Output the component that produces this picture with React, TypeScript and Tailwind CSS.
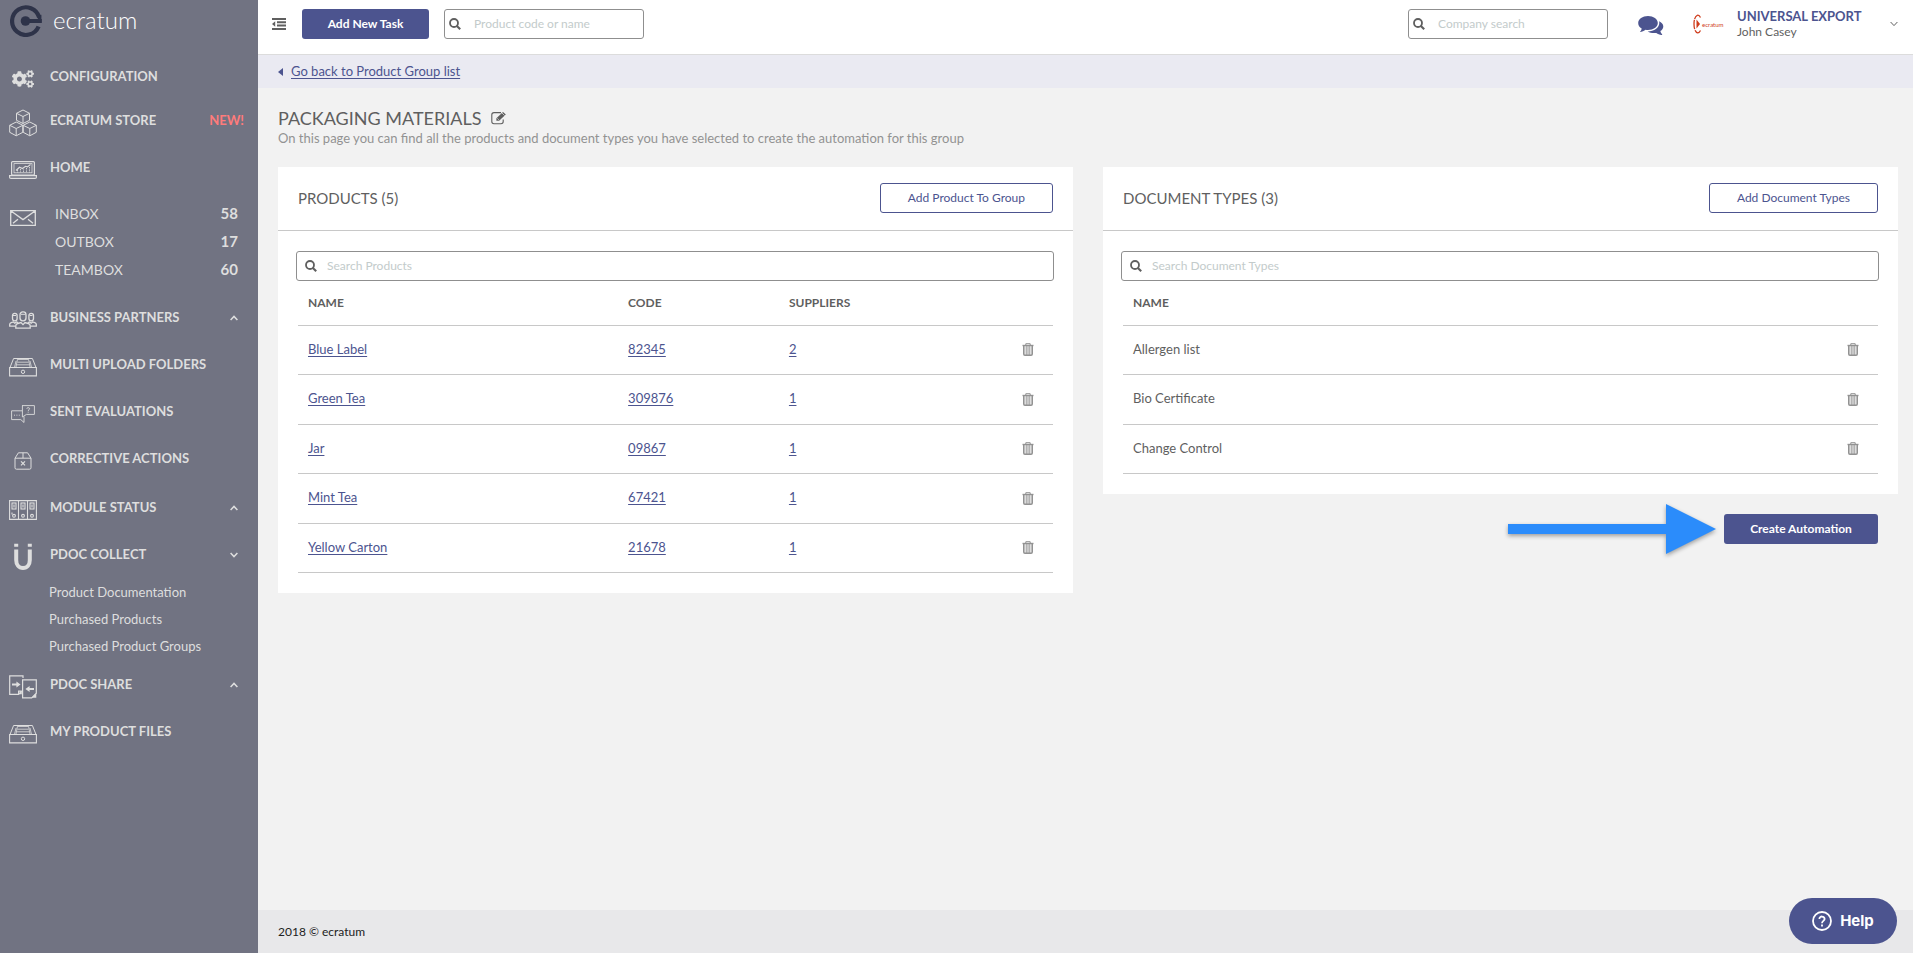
import { ReactNode } from 'react';
import { FaCogs } from 'react-icons/fa';

interface Product {
  name: string;
  code: string;
  suppliers: number;
}

interface NavItemProps {
  icon: ReactNode;
  label: string;
  badge?: string;
  arrow?: 'up' | 'down';
}

const products: Product[] = [
  { name: 'Blue Label', code: '82345', suppliers: 2 },
  { name: 'Green Tea', code: '309876', suppliers: 1 },
  { name: 'Jar', code: '09867', suppliers: 1 },
  { name: 'Mint Tea', code: '67421', suppliers: 1 },
  { name: 'Yellow Carton', code: '21678', suppliers: 1 },
];

const documentTypes = ['Allergen list', 'Bio Certificate', 'Change Control'];

const boxes = [
  { label: 'INBOX', count: 58 },
  { label: 'OUTBOX', count: 17 },
  { label: 'TEAMBOX', count: 60 },
];

const collectLinks = ['Product Documentation', 'Purchased Products', 'Purchased Product Groups'];

function LogoMark() {
  return (
    <svg width="32" height="32" viewBox="0 0 32 32" fill="none" stroke="#2e3349">
      <path d="M29.2 12.5A13.8 13.8 0 1 0 28.6 21.5" strokeWidth="4.2" />
      <path d="M16 16h15.8" strokeWidth="4" />
      <circle cx="15.5" cy="16" r="4.8" fill="#2e3349" stroke="none" />
      <path d="M29.6 17.5V9.8" strokeWidth="3.6" />
    </svg>
  );
}

function StoreIcon() {
  return (
    <svg width="28" height="28" viewBox="0 0 28 28" fill="none" stroke="currentColor" strokeWidth="1" strokeLinejoin="round">
      <path d="M14 1l6.5 3.3v7L14 14.5l-6.5-3.2v-7zM7.5 4.3L14 7.5l6.5-3.2M14 7.5v7" />
      <path d="M7.2 13l6.6 3.3v7l-6.6 3.5-6.5-3.5v-7zM.7 16.3l6.5 3.2 6.6-3.2M7.2 19.5v7" />
      <path d="M20.8 13l6.5 3.3v7l-6.5 3.5-6.6-3.5v-7zM14.2 16.3l6.6 3.2 6.5-3.2M20.8 19.5v7" />
    </svg>
  );
}

function LaptopIcon() {
  return (
    <svg width="28" height="20" viewBox="0 0 28 20" fill="none" stroke="currentColor" strokeWidth="1.2">
      <rect x="2.6" y="1.6" width="22.8" height="13.5" rx="1" />
      <rect x="5" y="3.6" width="18" height="9.2" strokeWidth="0.8" />
      <path d="M.6 15.6h26.8v1.6c0 .8-.6 1.2-1.4 1.2H2c-.8 0-1.4-.4-1.4-1.2z" />
      <path d="M7 10.5l3.5-3.2 3 1.2 3-2.2 2 .6 3-2.3" />
      <path d="M8.5 10v2.5M11.5 9v3.5M14.5 9.5v3M17.5 8v4.5M20.5 7v5.5" strokeWidth="0.9" strokeDasharray="1 .6" />
    </svg>
  );
}

function EnvelopeIcon() {
  return (
    <svg width="26" height="16" viewBox="0 0 26 16" fill="none" stroke="currentColor" strokeWidth="1.3">
      <path d="M.7.7h24.6v14.6H.7zM.7.7L13 9.6 25.3.7M3 13.2l5-4M23 13.2l-5-4" />
    </svg>
  );
}

function PeopleIcon() {
  return (
    <svg width="28" height="18" viewBox="0 0 28 18" fill="none" stroke="currentColor" strokeWidth="1.3">
      <rect x="11" y=".9" width="6" height="9" rx="2.8" />
      <rect x="3.5" y="2.4" width="4.6" height="7.4" rx="2.2" />
      <rect x="19.9" y="2.4" width="4.6" height="7.4" rx="2.2" />
      <path d="M12 3.3h4.5M4 4.5h3M20.5 4.5h3" strokeWidth="1" />
      <path d="M6.8 17.2v-2.4c0-1.3.8-2 2-2.3l3.2-.9 2 2 2-2 3.2.9c1.2.3 2 1 2 2.3v2.4z" />
      <path d="M6.6 15.2H.7v-1.7c0-1 .6-1.5 1.5-1.8l2.2-.7 1.4 1.2L7.3 11l1.9.6M21.4 15.2h5.9v-1.7c0-1-.6-1.5-1.5-1.8l-2.2-.7-1.4 1.2-1.5-1.2-1.9.6" />
    </svg>
  );
}

function DrawerIcon() {
  return (
    <svg width="28" height="20" viewBox="0 0 28 20" fill="none" stroke="currentColor">
      <path d="M.6 10.5h26.8v8.4H.6z" strokeWidth="1.1" />
      <path d="M1 10.5l3.6-9h18.8l3.6 9" />
      <path d="M7 10l1.5-8M21 10l-1.5-8M9 2.5h10M8.4 5.2h11.2M7.6 7.8h12.8M5.6 10L7 4M22.4 10L21 4" strokeWidth="0.8" />
      <circle cx="14" cy="14.8" r="1.7" />
    </svg>
  );
}

function EvaluationIcon() {
  return (
    <svg width="24" height="18" viewBox="0 0 24 18" fill="none" stroke="currentColor" strokeWidth="0.9">
      <path d="M11 .6h12.4v8.8h-7.9L11.4 12V.6" />
      <path d="M11 5.8H.6v8.8h9.2l3.2 2.9v-6" />
      <path d="M3 10.2h1M5.4 10.2h1M7.8 10.2h1" />
      <path d="M15.8 3.7c0-1.4 2.8-1.4 2.8 0 0 1-1.4 1-1.4 2.2M17.2 6.7v.9" />
    </svg>
  );
}

function BoxIcon() {
  return (
    <svg width="18" height="18" viewBox="0 0 18 18" fill="none" stroke="currentColor" strokeWidth="1">
      <path d="M1 6.2L4.4.8h9.2L17 6.2v9.6c0 .9-.5 1.4-1.4 1.4H2.4c-.9 0-1.4-.5-1.4-1.4zM1 6.2h16M9 .8v5.4" />
      <path d="M7 9.4l4 4M11 9.4l-4 4" strokeWidth="1.2" />
    </svg>
  );
}

function BindersIcon() {
  return (
    <svg width="28" height="20" viewBox="0 0 28 20" fill="none" stroke="currentColor" strokeWidth="1.1">
      <path d="M.6.6h26.8v18.8H.6zM9.5.6v18.8M18.5.6v18.8" />
      <rect x="3" y="3" width="4" height="6" />
      <rect x="12" y="3" width="4" height="6" />
      <rect x="21" y="3" width="4" height="6" />
      <path d="M5 4.5v3M14 4.5v3M23 4.5v3M3 12.5v2" />
      <circle cx="5" cy="15.8" r="1.4" />
      <circle cx="14" cy="15.8" r="1.4" />
      <circle cx="23" cy="15.8" r="1.4" />
    </svg>
  );
}

function MagnetIcon() {
  return (
    <svg width="18" height="28" viewBox="0 0 18 28" fill="none" stroke="currentColor" strokeWidth="4">
      <path d="M2.2 6.5V17c0 4.6 2.6 8 6.8 8s6.8-3.4 6.8-8V6.5" />
      <path d="M2.2.8v3M15.8.8v3" />
    </svg>
  );
}

function ShareIcon() {
  return (
    <svg width="28" height="24" viewBox="0 0 28 24" fill="none" stroke="currentColor" strokeWidth="1.2">
      <path d="M14 3V.8H.7v18.5h8.8l3-3M12.8 16.2H9.6v3" />
      <path d="M13.6 4.8h13.7v13.4l-4.6 4.6h-9.1z" />
      <path d="M27.3 18.2v4.6h-4.6zM12.8 15.8v3.5H9.3z" fill="currentColor" stroke="none" />
      <path d="M3 9.5h5M25 14h-5" strokeWidth="1.8" />
      <path d="M7.4 6.5v6l4.2-3zM20.6 11v6l-4.2-3z" fill="currentColor" stroke="none" />
    </svg>
  );
}

function Chevron({ direction }: { direction: 'up' | 'down' }) {
  return (
    <svg width="8" height="6" viewBox="0 0 8 6" fill="none" stroke="currentColor" strokeWidth="1.5">
      <path d={direction === 'up' ? 'M.6 5L4 1.4 7.4 5' : 'M.6 1L4 4.6 7.4 1'} />
    </svg>
  );
}

function SearchIcon() {
  return (
    <svg width="12" height="12" viewBox="0 0 12 12" fill="none" stroke="currentColor">
      <circle cx="5" cy="5" r="4" strokeWidth="1.8" />
      <path d="M7.9 7.9l3.3 3.3" strokeWidth="2.1" />
    </svg>
  );
}

function TrashIcon() {
  return (
    <svg width="12" height="13" viewBox="0 0 12 13" fill="none" stroke="currentColor">
      <path d="M.5 2.5h11" strokeWidth="1.4" />
      <path d="M3.8 2V.7h4.4V2" />
      <path d="M1.8 2.5v8.6c0 .7.4 1.1 1.1 1.1h6.2c.7 0 1.1-.4 1.1-1.1V2.5" strokeWidth="1.6" />
      <path d="M4.2 3v9M6 3v9M7.8 3v9" strokeWidth="1" />
    </svg>
  );
}

function EditIcon() {
  return (
    <svg width="16" height="14" viewBox="0 0 16 14" fill="none" stroke="currentColor">
      <path d="M10 1.6H3A2.2 2.2 0 0 0 .8 3.8v6.8A2.2 2.2 0 0 0 3 12.8h7a2.2 2.2 0 0 0 2.2-2.2V8.6" strokeWidth="1.1" />
      <path d="M5.4 7.2L12 .9l2.8 2.7-6.7 6.2H5.4z" fill="currentColor" stroke="none" />
      <path d="M6.4 7.4l1.4 1.4M11 2l2.6 2.6" stroke="#f2f2f2" strokeWidth="0.7" />
    </svg>
  );
}

function MenuIcon() {
  return (
    <svg width="14" height="12" viewBox="0 0 14 12" fill="currentColor">
      <path d="M0 0h14v2H0zM5 3.2h9v2H5zM5 6.6h9v2H5zM0 10h14v2H0zM0 6l3.2-2.8v5.6z" />
    </svg>
  );
}

function CommentsIcon() {
  return (
    <svg width="26" height="20" viewBox="0 0 26 20" fill="currentColor">
      <path d="M10 0c5.400 0 9.800 3.100 9.800 7s-4.400 7-9.800 7c-.8 0-1.600-.1-2.400-.2C6 15 4.200 15.700 1.800 16c1-.9 1.700-1.900 1.900-3.400C1.400 11.300.2 9.300.2 7c0-3.900 4.400-7 9.800-7z" />
      <path d="M21 5.200c2.600 1 4.300 3 4.300 5.200 0 1.900-1.100 3.500-2.900 4.600.2 1.400.8 2.400 1.700 3.300.3.400 0 .8-.4.700-2.300-.3-3.900-1-5.400-2.100-3.200.5-6.200 0-8.600-1.500 6.400 0 11.600-3.700 11.600-8.400 0-.6-.1-1.200-.3-1.800z" />
    </svg>
  );
}

function NavItem({ icon, label, badge, arrow }: NavItemProps) {
  return (
    <a href="#" className="flex h-[47px] items-center pr-5">
      <span className="flex w-[46px] justify-center pt-1">{icon}</span>
      <span className="ml-1 flex-1 text-[13px] font-bold whitespace-nowrap">{label}</span>
      {badge && <span className="-mr-[6px] text-[13px] font-bold text-[#ff7b7b]">{badge}</span>}
      {arrow && <Chevron direction={arrow} />}
    </a>
  );
}

function Sidebar() {
  return (
    <aside className="w-[258px] shrink-0 bg-[#717382] text-[#dedede]">
      <a href="#" className="flex h-[54px] items-start gap-[11px] pt-[5px] pl-[10px]">
        <LogoMark />
        <span className="text-2xl leading-[30px] font-light text-white">ecratum</span>
      </a>
      <nav className="pt-px">
        <div className="[&>a]:h-11">
          <NavItem icon={<FaCogs size={22} />} label="CONFIGURATION" />
          <NavItem icon={<StoreIcon />} label="ECRATUM STORE" badge="NEW!" />
        </div>
        <div className="pt-px">
          <NavItem icon={<LaptopIcon />} label="HOME" />
        </div>
        <div className="flex pt-[9px] pb-[10px]">
          <span className="flex w-[46px] justify-center pt-[10px]">
            <EnvelopeIcon />
          </span>
          <ul className="flex-1 pr-5 pl-[9px] text-sm">
            {boxes.map((box) => (
              <li key={box.label}>
                <a href="#" className="flex h-7 items-center justify-between">
                  <span>{box.label}</span>
                  <span className="text-[15px] font-bold">{box.count}</span>
                </a>
              </li>
            ))}
          </ul>
        </div>
        <NavItem icon={<PeopleIcon />} label="BUSINESS PARTNERS" arrow="up" />
        <NavItem icon={<DrawerIcon />} label="MULTI UPLOAD FOLDERS" />
        <NavItem icon={<EvaluationIcon />} label="SENT EVALUATIONS" />
        <NavItem icon={<BoxIcon />} label="CORRECTIVE ACTIONS" />
        <div className="pt-[2px]">
          <NavItem icon={<BindersIcon />} label="MODULE STATUS" arrow="up" />
          <NavItem icon={<MagnetIcon />} label="PDOC COLLECT" arrow="down" />
        </div>
        <ul className="pt-px pb-px pl-[49px] text-[13px]">
          {collectLinks.map((link) => (
            <li key={link}>
              <a href="#" className="flex h-[27px] items-center">
                {link}
              </a>
            </li>
          ))}
        </ul>
        <NavItem icon={<ShareIcon />} label="PDOC SHARE" arrow="up" />
        <NavItem icon={<DrawerIcon />} label="MY PRODUCT FILES" />
      </nav>
    </aside>
  );
}

function TopSearch({ placeholder }: { placeholder: string }) {
  return (
    <label className="flex h-[30px] w-[200px] items-center gap-[13px] rounded-[3px] border border-[#8f8f8f] bg-white px-1 text-[#5f5f5f]">
      <SearchIcon />
      <input
        type="text"
        aria-label={placeholder}
        placeholder={placeholder}
        className="min-w-0 flex-1 text-xs outline-none placeholder:text-[#c3cbcb]"
      />
    </label>
  );
}

function Header() {
  return (
    <header className="flex h-[55px] border-b border-[#dcdcdc] bg-white pt-[9px] pr-[15px] pl-[14px]">
      <button type="button" aria-label="Toggle menu" className="flex h-[30px] items-center text-[#5f5f5f]">
        <MenuIcon />
      </button>
      <button type="button" className="mr-[15px] ml-4 h-[30px] w-[127px] rounded-[3px] bg-[#4c548f] text-xs font-bold text-white">
        Add New Task
      </button>
      <TopSearch placeholder="Product code or name" />
      <div className="ml-auto flex">
        <TopSearch placeholder="Company search" />
        <button type="button" aria-label="Messages" className="ml-[30px] flex h-[34px] items-center text-[#4c548f]">
          <CommentsIcon />
        </button>
        <span className="ml-[29px] flex h-[30px] items-center text-[#cf3c1c]">
          <svg width="9" height="22" viewBox="0 0 9 22" fill="none" stroke="currentColor">
            <path d="M7.5 4.5C5-.5 1 3 1 11s4 11.500 6.500 6.500" strokeWidth="1.3" strokeDasharray="9 1" />
            <path d="M3.500 6.500v9L7 11z" fill="currentColor" stroke="none" />
          </svg>
          <span className="w-5 text-[6px]">ecratum</span>
        </span>
        <button type="button" className="ml-[15px] flex h-[30px] w-[161px] items-center justify-between text-left">
          <span className="flex flex-col">
            <span className="text-[13px] leading-[15px] font-bold whitespace-nowrap text-[#4c548f]">UNIVERSAL EXPORT</span>
            <span className="text-xs leading-[15px]">John Casey</span>
          </span>
          <svg width="8" height="6" viewBox="0 0 8 6" fill="none" stroke="currentColor">
            <path d="M.6 1L4 4.6 7.4 1" />
          </svg>
        </button>
      </div>
    </header>
  );
}

interface PanelProps {
  title: string;
  action: string;
  placeholder: string;
  children: ReactNode;
}

function Panel({ title, action, placeholder, children }: PanelProps) {
  return (
    <section className="bg-white pb-5">
      <div className="flex h-16 items-start justify-between border-b border-[#c8c8c8] px-5 pt-4">
        <h2 className="text-[15px] leading-[30px]">{title}</h2>
        <button type="button" className="h-[30px] rounded-[3px] border border-[#4c548f] px-[27px] text-xs text-[#4c548f]">
          {action}
        </button>
      </div>
      <label className="mt-5 mr-[19px] ml-[18px] flex h-[30px] items-center gap-[10px] rounded-[3px] border border-[#8f8f8f] px-2">
        <SearchIcon />
        <input
          type="text"
          aria-label={placeholder}
          placeholder={placeholder}
          className="min-w-0 flex-1 text-xs outline-none placeholder:text-[#c3cbcb]"
        />
      </label>
      <div className="px-5">{children}</div>
    </section>
  );
}

function DeleteCell({ name }: { name: string }) {
  return (
    <td className="pr-[19px]">
      <button type="button" aria-label={`Delete ${name}`} className="ml-auto block text-[#929292]">
        <TrashIcon />
      </button>
    </td>
  );
}

function ProductsTable() {
  return (
    <table className="w-full table-fixed text-left text-[13px]">
      <thead className="text-xs">
        <tr className="h-11 border-b border-[#c8c8c8]">
          <th className="w-[42.4%] pt-px pl-[10px]">NAME</th>
          <th className="w-[21.3%] pt-px pl-[10px]">CODE</th>
          <th className="pt-px pl-[10px]">SUPPLIERS</th>
          <td className="w-12"></td>
        </tr>
      </thead>
      <tbody className="text-[#4c548f]">
        {products.map((product) => (
          <tr key={product.code} className="border-b border-[#c8c8c8] odd:h-[49px] even:h-[50px]">
            <td className="pl-[10px]">
              <a href="#" className="underline underline-offset-2">{product.name}</a>
            </td>
            <td className="pl-[10px]">
              <a href="#" className="underline underline-offset-2">{product.code}</a>
            </td>
            <td className="pl-[10px]">
              <a href="#" className="underline underline-offset-2">{product.suppliers}</a>
            </td>
            <DeleteCell name={product.name} />
          </tr>
        ))}
      </tbody>
    </table>
  );
}

function DocumentTypesTable() {
  return (
    <table className="w-full table-fixed text-left text-[13px]">
      <thead className="text-xs">
        <tr className="h-11 border-b border-[#c8c8c8]">
          <th className="pt-px pl-[10px]">NAME</th>
          <td className="w-12"></td>
        </tr>
      </thead>
      <tbody>
        {documentTypes.map((type) => (
          <tr key={type} className="border-b border-[#c8c8c8] odd:h-[49px] even:h-[50px]">
            <td className="pl-[10px]">{type}</td>
            <DeleteCell name={type} />
          </tr>
        ))}
      </tbody>
    </table>
  );
}

function Arrow() {
  return (
    <svg width="208" height="50" viewBox="0 0 208 50" className="overflow-visible drop-shadow-[0_2px_2px_rgba(0,0,0,0.35)]">
      <path d="M0 20h158V0l50 25-50 25V30H0z" fill="#2b8cfb" />
    </svg>
  );
}

export default function App() {
  return (
    <div className="flex min-h-screen bg-[#f2f2f2] font-['Lato',sans-serif] text-[#5f5f5f]">
      <Sidebar />
      <div className="flex min-w-0 flex-1 flex-col">
        <Header />
        <div className="flex h-[33px] items-center gap-2 bg-[#eaeaf2] pl-5 text-[13px] text-[#4c548f]">
          <svg width="5" height="8" viewBox="0 0 5 8" fill="currentColor">
            <path d="M5 0v8L0 4z" />
          </svg>
          <a href="#" className="underline underline-offset-2">Go back to Product Group list</a>
        </div>
        <main className="flex-1 pt-[18px] pr-[15px] pl-5">
          <div className="flex items-center gap-[10px]">
            <h1 className="text-lg leading-6">PACKAGING MATERIALS</h1>
            <button type="button" aria-label="Edit group name">
              <EditIcon />
            </button>
          </div>
          <p className="text-[13px] leading-4 text-[#929292]">
            On this page you can find all the products and document types you have selected to create the automation for this group
          </p>
          <div className="mt-[21px] grid grid-cols-2 items-start gap-[30px]">
            <Panel title="PRODUCTS (5)" action="Add Product To Group" placeholder="Search Products">
              <ProductsTable />
            </Panel>
            <div>
              <Panel title="DOCUMENT TYPES (3)" action="Add Document Types" placeholder="Search Document Types">
                <DocumentTypesTable />
              </Panel>
              <div className="mt-[10px] flex items-center justify-end gap-2 pr-5">
                <Arrow />
                <button type="button" className="h-[30px] w-[154px] rounded-[3px] bg-[#4c548f] text-xs font-bold text-white">
                  Create Automation
                </button>
              </div>
            </div>
          </div>
        </main>
        <footer className="flex h-[43px] items-center bg-[#e8e8ea] pt-px pl-5 text-xs text-[#222]">2018 © ecratum</footer>
      </div>
      <button
        type="button"
        className="fixed right-4 bottom-[9px] flex h-[46px] w-[108px] items-center justify-center gap-2 rounded-full bg-[#4c548f] font-['Inter',sans-serif] text-[15px] font-bold text-white"
      >
        <svg width="20" height="20" viewBox="0 0 20 20" fill="none" stroke="currentColor">
          <circle cx="10" cy="10" r="9" strokeWidth="1.8" />
          <path d="M7.4 8c0-3.4 5.2-3.2 5.2 0 0 1.8-2.6 2-2.6 4.2M10 13.600v2" strokeWidth="1.8" />
        </svg>
        Help
      </button>
    </div>
  );
}
